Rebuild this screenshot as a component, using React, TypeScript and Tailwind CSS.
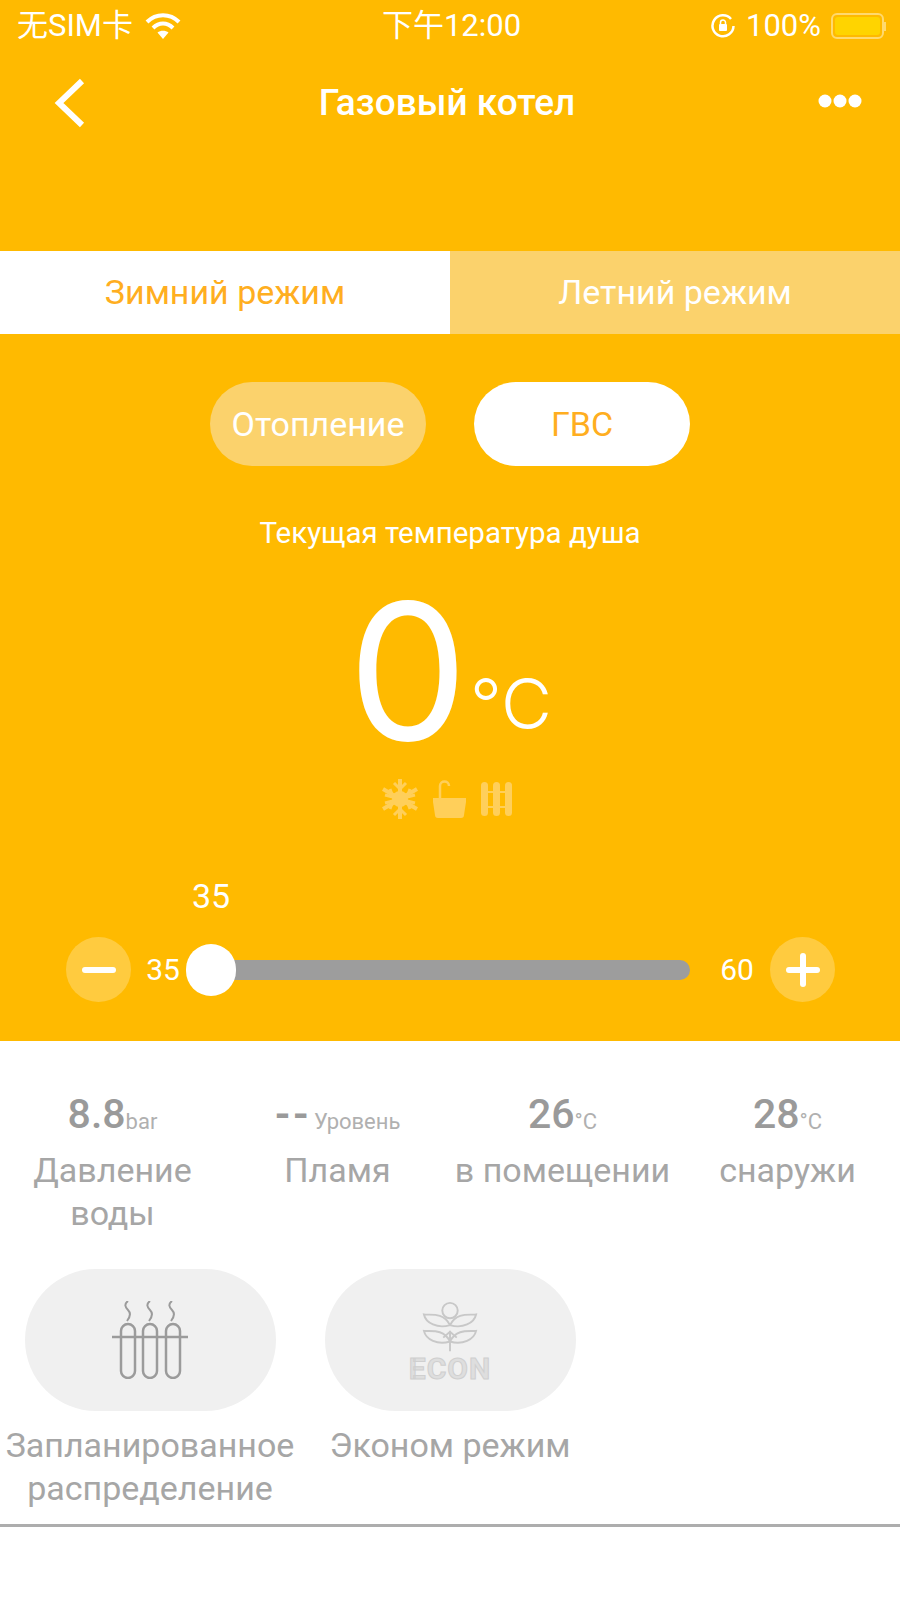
import { FC, ReactNode } from "react";

const font = { fontFamily: '"Roboto", "Noto Sans CJK SC", sans-serif' };
const bigFont = { fontFamily: '"Inter", sans-serif' };

const Wifi = () => (
  <svg width="36" height="28" viewBox="0 0 36 28" fill="none" stroke="#fff" strokeWidth="4">
    <path d="M2 10C11 1 25 1 34 10" />
    <path d="M8 16C14 10 22 10 28 16" />
    <path d="M18 27l-5.500-6.500c3-2.500 8-2.500 11 0z" fill="#fff" stroke="none" />
  </svg>
);

const Lock = () => (
  <svg width="26" height="26" viewBox="0 0 26 26" fill="none" stroke="#fff">
    <path d="M21 6a10.500 10.500 0 1 0 2.500 7" strokeWidth="2.500" />
    <rect x="9" y="11" width="8" height="7" rx="1" fill="#fff" stroke="none" />
    <path d="M10.500 11V9.500a2.500 2.500 0 0 1 5 0V11" strokeWidth="1.500" />
  </svg>
);

const Battery = () => (
  <div className="flex items-center">
    <div className="w-[53px] h-[26px] rounded-[6px] border-2 border-[#ffd96f] p-[2px]">
      <div className="w-full h-full rounded-[3px] bg-[#ffd400]" />
    </div>
    <div className="w-[2px] h-[9px] bg-[#ffd96f]" />
  </div>
);

const Snow = () => (
  <svg width="36" height="40" viewBox="0 0 36 40" fill="none" stroke="#ffcf5a" strokeWidth="4">
    <path d="M18 0v40M1 10l34 20M35 10L1 30" />
    <path d="M12 4l6 6 6-6M12 36l6-6 6 6M3 16l8 2-3-8M33 16l-8 2 3-8M3 24l8-2-3 8M33 24l-8-2 3 8" strokeWidth="3" />
    <circle cx="18" cy="20" r="8" fill="#ffcf5a" stroke="none" />
  </svg>
);

const Tub = () => (
  <svg width="33" height="38" viewBox="0 0 33 38" fill="none">
    <path d="M7 20V6c0-6 9-6 9 0" stroke="#ffcf5a" strokeWidth="2.500" />
    <path d="M0 18h33v4l-2 13a3 3 0 0 1-3 3H5a3 3 0 0 1-3-3L0 22z" fill="#ffcf5a" />
  </svg>
);

const Rad = () => (
  <svg width="31" height="34" viewBox="0 0 31 34" fill="#ffcf5a">
    <rect x="0" y="0" width="7" height="34" rx="3.500" />
    <rect x="12" y="0" width="7" height="34" rx="3.500" />
    <rect x="24" y="0" width="7" height="34" rx="3.500" />
    <rect x="0" y="9" width="31" height="2" />
    <rect x="0" y="24" width="31" height="2" />
  </svg>
);

const Tubes = () => (
  <svg width="76" height="78" viewBox="0 0 76 78" fill="none" stroke="#9b9b9b" strokeWidth="2.500">
    <path d="M16 0c-4 3-3 6 0 9 3 3 3 6-1 11M38 0c-4 3-3 6 0 9 3 3 3 6-1 11M60 0c-4 3-3 6 0 9 3 3 3 6-1 11" strokeWidth="2" />
    <path d="M0 36h76" />
    <rect x="9" y="23" width="14" height="54" rx="7" />
    <rect x="31" y="23" width="14" height="54" rx="7" />
    <rect x="54" y="23" width="14" height="54" rx="7" />
  </svg>
);

const Econ = () => (
  <div className="flex flex-col items-center">
    <svg width="56" height="52" viewBox="0 0 58 52" fill="none" stroke="#c8c8c8" strokeWidth="2">
      <circle cx="29" cy="9" r="8" />
      <path d="M29 24C22 10 8 14 2 13c2 9 14 15 27 11zM29 24c7-14 21-10 27-11-2 9-14 15-27 11z" />
      <path d="M29 41C22 27 8 31 2 30c2 9 14 15 27 11zM29 41c7-14 21-10 27-11-2 9-14 15-27 11z" />
      <path d="M29 30v21M22 37l7-6 7 6" />
    </svg>
    <span className="text-[30px] leading-[22px] mt-[5px] font-bold tracking-[1px] text-[#dedede]" style={{ WebkitTextStroke: "1px #cfcfcf" }}>
      ECON
    </span>
  </div>
);

const Stat: FC<{ value: string; unit: string; label: ReactNode; tight?: boolean }> = ({ value, unit, label, tight }) => (
  <div className="flex flex-col items-center text-center">
    <div className="h-[50px] flex items-end justify-center text-[#9a9a9a]">
      <span className={tight ? "text-[41px] leading-[50px] font-bold tracking-[2px] mr-[3px]" : "text-[41px] leading-[50px] font-medium"}>{value}</span>
      <span className="text-[22px] leading-[22px] mb-[6px] text-[#b0b0b0]">{unit}</span>
    </div>
    <div className="mt-[10px] text-[34px] leading-[43px] text-[#a6a6a6]">{label}</div>
  </div>
);

const Feature: FC<{ icon: ReactNode; label: ReactNode }> = ({ icon, label }) => (
  <div className="w-[300px] flex flex-col items-center text-center">
    <div className="w-[251px] h-[142px] rounded-[71px] bg-[#f0f0f0] flex items-center justify-center">{icon}</div>
    <div className="mt-[13px] text-[34px] leading-[43px] text-[#a6a6a6] whitespace-nowrap">{label}</div>
  </div>
);

export default function App() {
  return (
    <div className="w-[900px] h-[1598px] bg-white overflow-hidden" style={font}>
      <div className="bg-[#ffba00] h-[1041px] text-white">
        <div className="h-[52px] pl-[17px] pr-[14px] flex items-center justify-between text-[31px] text-[#fff]">
          <div className="w-[300px] flex items-center gap-[12px]">
            <span>无SIM卡</span>
            <Wifi />
          </div>
          <span>下午12:00</span>
          <div className="w-[300px] flex items-center justify-end gap-[10px]">
            <Lock />
            <span>100%</span>
            <Battery />
          </div>
        </div>

        <div className="h-[102px] pl-[54px] pr-[38px] flex items-center justify-between">
          <svg width="32" height="50" viewBox="0 0 32 50" fill="none" stroke="#fff" strokeWidth="6">
            <path d="M28 3L5 25l23 22" />
          </svg>
          <span className="text-[37px] font-medium mr-[10px]">Газовый котел</span>
          <svg className="mb-[4px]" width="44" height="18" viewBox="0 0 44 18" fill="#fff">
            <circle cx="7" cy="9" r="6.500" />
            <circle cx="22" cy="9" r="6.500" />
            <circle cx="37" cy="9" r="6.500" />
          </svg>
        </div>

        <div className="mt-[97px] flex h-[83px] text-[34px]">
          <div className="w-[450px] bg-white text-[#ffae20] flex items-center justify-center">Зимний режим</div>
          <div className="w-[450px] bg-[#fbd26c] flex items-center justify-center">Летний режим</div>
        </div>

        <div className="mt-[48px] flex justify-center gap-[48px] text-[34px]">
          <div className="w-[216px] h-[84px] rounded-[42px] bg-[#fbd26c] flex items-center justify-center">Отопление</div>
          <div className="w-[216px] h-[84px] rounded-[42px] bg-white text-[#ffae20] flex items-center justify-center">ГВС</div>
        </div>

        <div className="mt-[49px] text-center text-[29.500px] leading-[36px]">Текущая температура душа</div>

        <div className="mt-[25px] h-[190px] flex items-end justify-center" style={bigFont}>
          <span className="text-[190px] leading-[190px] font-normal">0</span>
          <span className="text-[70px] leading-[80px] font-light mb-[22px] ml-[2px]">°C</span>
        </div>

        <div className="mt-[13px] pr-[6px] flex items-center justify-center gap-[15px]">
          <Snow />
          <Tub />
          <Rad />
        </div>

        <div className="mt-[57px] pl-[192px] text-[34px] leading-[40px] w-[228px] text-center">35</div>

        <div className="mt-[21px] px-[66px] flex items-center">
          <div className="w-[65px] h-[65px] shrink-0 rounded-full bg-[#ffcb3f] flex items-center justify-center">
            <div className="w-[34px] h-[6px] rounded-full bg-white" />
          </div>
          <span className="w-[64px] shrink-0 text-center text-[30px]">35</span>
          <div className="relative w-[495px] shrink-0 h-[20px] rounded-full bg-[#9d9d9d]">
            <div className="absolute left-[-9px] top-[-16px] w-[50px] h-[52px] rounded-full bg-white" />
          </div>
          <span className="ml-[14px] w-[66px] shrink-0 text-center text-[30px]">60</span>
          <div className="relative w-[65px] h-[65px] shrink-0 rounded-full bg-[#ffcb3f] flex items-center justify-center">
            <div className="w-[34px] h-[6px] rounded-full bg-white" />
            <div className="absolute w-[6px] h-[34px] rounded-full bg-white" />
          </div>
        </div>
      </div>

      <div className="pt-[48px] grid grid-cols-4 h-[228px]">
        <Stat value="8.8" unit="bar" label={<>Давление<br />воды</>} />
        <Stat value="--" unit="Уровень" label="Пламя" tight />
        <Stat value="26" unit="°C" label="в помещении" />
        <Stat value="28" unit="°C" label="снаружи" />
      </div>

      <div className="flex h-[255px]">
        <Feature icon={<Tubes />} label={<>Запланированное<br />распределение</>} />
        <Feature icon={<Econ />} label="Эконом режим" />
      </div>
      <div className="h-[3px] bg-[#adadad]" />
    </div>
  );
}
